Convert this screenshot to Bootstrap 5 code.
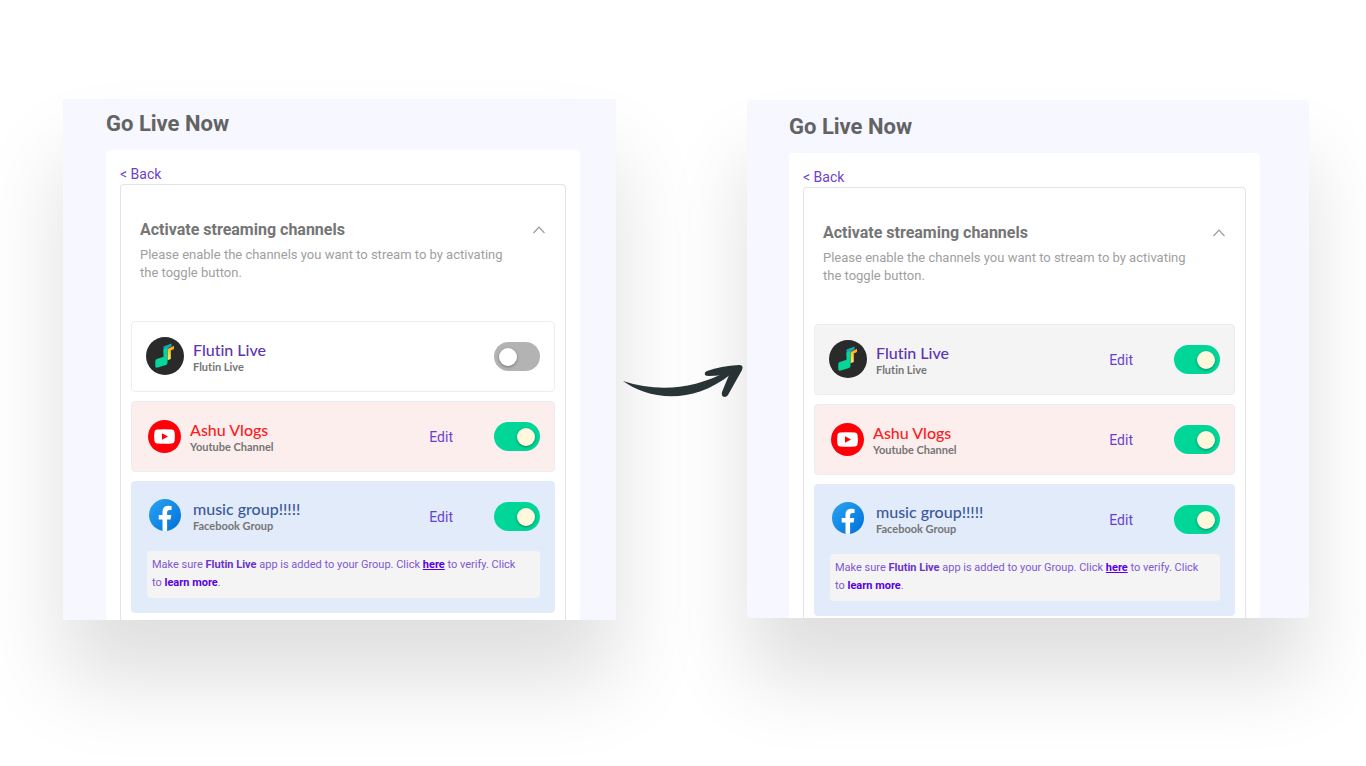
<!DOCTYPE html>
<html lang="en">
<head>
<meta charset="utf-8">
<meta name="viewport" content="width=device-width, initial-scale=1">
<title>Go Live Now</title>
<link href="https://cdn.jsdelivr.net/npm/bootstrap@5.3.0/dist/css/bootstrap.min.css" rel="stylesheet">
<style>
  body { font-family: Roboto, sans-serif; background: #fff; }
  a { color: #6c3fcb; text-decoration: none; }
  .stage { display: grid; grid-template-columns: 553fr 131px 562fr; padding: 99px 57px 60px 63px; min-height: 100vh; overflow: hidden; align-items: start; }
  .panel { background: #f6f7ff; padding: 10px 36px 0 43px; box-shadow: 0 60px 80px rgba(0,0,0,.13); }
  .panel-after { margin-top: 1px; padding: 12px 49px 0 42px; border-radius: 4px; }
  .panel h1 { font-size: 22px; line-height: 29px; font-weight: 700; color: #636363; margin: 0 0 12px; }
  .sheet { background: #fff; border-radius: 4px 4px 0 0; padding: 14px 14px 0; }
  .back { display: block; font-size: 14px; line-height: 20px; }
  .steps { border: 1px solid #e4e4e6; border-bottom: 0; border-radius: 4px 4px 0 0; padding: 33px 10px 7px; }
  .panel-after .steps { padding-bottom: 2px; }
  .intro { padding: 0 9px; height: 103px; }
  .intro h2 { font-size: 16px; line-height: 24px; font-weight: 700; color: #757575; margin: 0 0 4px; }
  .intro p { font-size: 13px; line-height: 18px; color: #a0a0a0; margin: 0; max-width: 372px; }
  .collapser { border: 0; background: none; padding: 0; line-height: 0; margin: 8px 1px 0 0; align-self: flex-start; }
  .channels { display: grid; gap: 9px; }
  .channel { border: 1px solid #e9edf4; border-radius: 4px; }
  .channel-row { height: 69px; padding: 0 14px; }
  .idle { background: #fff; }
  .flutin { background: #f4f4f4; }
  .youtube { background: #fdeeee; }
  .facebook { background: #e2ebfa; border-color: #e2ebfa; padding-bottom: 14px; }
  .avatar { width: 38px; flex: none; margin-right: 9px; padding-bottom: 2px; }
  .youtube .avatar { width: 36px; margin-right: 8px; padding-bottom: 0; }
  .avatar svg { display: block; margin: 0 auto; }
  .who { font-family: Lato, sans-serif; font-variant-ligatures: none; }
  .facebook .who { padding-bottom: 2px; }
  .facebook .avatar { padding-bottom: 4px; }
  .who-name { font-size: 16px; line-height: 20px; font-weight: 500; }
  .who-kind { font-size: 11px; line-height: 14px; font-weight: 700; color: #757575; }
  .flutin-name { color: #5d35b1; }
  .youtube-name { color: #fb2020; }
  .facebook-name { color: #3b5998; }
  .edit { font-size: 14px; line-height: 20px; margin-right: 41px; }
  .toggle { appearance: none; width: 46px; height: 29px; border-radius: 15px; background: #b3b3b3; margin: 0; padding: 0 5px; display: flex; align-items: center; flex: none; }
  .toggle::before { content: ""; width: 18px; height: 18px; border-radius: 50%; background: #fff; box-shadow: 0 1px 3px rgba(0,0,0,.35); }
  .toggle:checked { background: #00d698; justify-content: flex-end; }
  .toggle:checked::before { background: #fff8dc; }
  .note { background: #f4f4f4; border-radius: 4px; margin: 0 14px 0 15px; padding: 5px 16px 5px 5px; font-size: 11px; line-height: 18px; color: #8057d2; height: 47px; }
  .note strong { color: #6a33cc; }
  .note a { color: #5a00e6; font-weight: 700; }
  .arrow { margin: 265px 3px 0 7px; }
  .arrow svg { display: block; width: 100%; }
</style>
</head>
<body>
<svg class="position-absolute" width="0" height="0" aria-hidden="true">
  <defs>
    <linearGradient id="fb" x1="0" y1="0" x2="1" y2="1"><stop stop-color="#2aa4f4"/><stop offset="1" stop-color="#0070d8"/></linearGradient>
    <linearGradient id="gold" x1="0" y1="0" x2="0" y2="1"><stop stop-color="#ff9d0a"/><stop offset=".5" stop-color="#ffd23d"/><stop offset="1" stop-color="#ffe566"/></linearGradient>
  </defs>
  <symbol id="logo-flutin" viewBox="0 0 38 38">
    <circle cx="19" cy="19" r="19" fill="#2a2a2a"/>
    <path d="M21.500 12l6.500-3.200V12l-3.200 1.500V22l-3.300 1.300z" fill="url(#gold)"/>
    <path d="M17.500 9.500l8-3v3l-4 2V15l-4 1z" fill="#12a9b2"/>
    <path d="M17.500 12.500l4-1.500V26q0 1.300-1.400 1.900l-8.300 2.700q-2.300.5-2.500-1.400v-5.200q0-1.500 1.500-2l6.700-2.200z" fill="#05d59a"/>
  </symbol>
  <symbol id="logo-youtube" viewBox="0 0 33 33">
    <circle cx="16.500" cy="16.500" r="16.500" fill="#ff0008"/>
    <path d="M9 9.500q7.500-.6 15 0 2.400.3 2.600 2.700.5 4.300 0 8.600-.2 2.400-2.600 2.700-7.500.6-15 0-2.400-.3-2.600-2.700-.5-4.300 0-8.600.2-2.400 2.600-2.700z" fill="#fff"/>
    <path d="M14 13.200v6.600l6-3.300z" fill="#ff0008"/>
  </symbol>
  <symbol id="logo-facebook" viewBox="0 0 32 32">
    <circle cx="16" cy="16" r="16" fill="url(#fb)"/>
    <path d="M13.500 31.800V20.500H9.700V16h3.800v-3.200c0-4 2.300-6 5.800-6 1.600 0 3.300.3 3.300.3v3.900h-1.900c-1.900 0-2.600 1.100-2.600 2.400V16h4.200l-.7 4.500h-3.500v11.300q-2.300.3-4.600 0z" fill="#fff"/>
  </symbol>
  <symbol id="chevron" viewBox="0 0 12 8"><path d="M.5 7L6 1.200 11.500 7" fill="none" stroke="#999" stroke-width="1.200"/></symbol>
</svg>

<main class="stage">
  <section class="panel">
    <h1>Go Live Now</h1>
    <div class="sheet">
      <a class="back" href="#">&lt; Back</a>
      <div class="steps">
        <div class="intro d-flex justify-content-between">
          <div>
            <h2>Activate streaming channels</h2>
            <p>Please enable the channels you want to stream to by activating the toggle button.</p>
          </div>
          <button class="collapser" type="button" aria-label="Collapse"><svg width="12" height="8"><use href="#chevron"/></svg></button>
        </div>
        <div class="channels">
          <div class="channel idle">
            <div class="channel-row d-flex align-items-center">
              <div class="avatar"><svg width="38" height="38"><use href="#logo-flutin"/></svg></div>
              <label class="who me-auto" for="a1"><span class="who-name flutin-name d-block">Flutin Live</span><span class="who-kind d-block">Flutin Live</span></label>
              <input class="toggle" type="checkbox" role="switch" id="a1">
            </div>
          </div>
          <div class="channel youtube">
            <div class="channel-row d-flex align-items-center">
              <div class="avatar"><svg width="33" height="33"><use href="#logo-youtube"/></svg></div>
              <label class="who me-auto" for="a2"><span class="who-name youtube-name d-block">Ashu Vlogs</span><span class="who-kind d-block">Youtube Channel</span></label>
              <a class="edit" href="#">Edit</a>
              <input class="toggle" type="checkbox" role="switch" id="a2" checked>
            </div>
          </div>
          <div class="channel facebook">
            <div class="channel-row d-flex align-items-center">
              <div class="avatar"><svg width="32" height="32"><use href="#logo-facebook"/></svg></div>
              <label class="who me-auto" for="a3"><span class="who-name facebook-name d-block">music group!!!!!</span><span class="who-kind d-block">Facebook Group</span></label>
              <a class="edit" href="#">Edit</a>
              <input class="toggle" type="checkbox" role="switch" id="a3" checked>
            </div>
            <div class="note">Make sure <strong>Flutin Live</strong> app is added to your Group. Click <a class="text-decoration-underline" href="#">here</a> to verify. Click to <a href="#">learn more</a>.</div>
          </div>
        </div>
      </div>
    </div>
  </section>

  <div class="arrow">
    <svg viewBox="0 0 121 34" role="img" aria-label="leads to" fill="#2a3538">
      <path d="M0 17C22 33 66 44 108 10L105 7C69 26 34 28 0 17z"/>
      <path d="M84 7Q81 8 82 11 83 12 86 12L106 11 99 28Q98 32 101 33 104 33 105 31L119 6Q121 1 116 1 98 2 84 7z"/>
    </svg>
  </div>

  <section class="panel panel-after">
    <h1>Go Live Now</h1>
    <div class="sheet">
      <a class="back" href="#">&lt; Back</a>
      <div class="steps">
        <div class="intro d-flex justify-content-between">
          <div>
            <h2>Activate streaming channels</h2>
            <p>Please enable the channels you want to stream to by activating the toggle button.</p>
          </div>
          <button class="collapser" type="button" aria-label="Collapse"><svg width="12" height="8"><use href="#chevron"/></svg></button>
        </div>
        <div class="channels">
          <div class="channel flutin">
            <div class="channel-row d-flex align-items-center">
              <div class="avatar"><svg width="38" height="38"><use href="#logo-flutin"/></svg></div>
              <label class="who me-auto" for="b1"><span class="who-name flutin-name d-block">Flutin Live</span><span class="who-kind d-block">Flutin Live</span></label>
              <a class="edit" href="#">Edit</a>
              <input class="toggle" type="checkbox" role="switch" id="b1" checked>
            </div>
          </div>
          <div class="channel youtube">
            <div class="channel-row d-flex align-items-center">
              <div class="avatar"><svg width="33" height="33"><use href="#logo-youtube"/></svg></div>
              <label class="who me-auto" for="b2"><span class="who-name youtube-name d-block">Ashu Vlogs</span><span class="who-kind d-block">Youtube Channel</span></label>
              <a class="edit" href="#">Edit</a>
              <input class="toggle" type="checkbox" role="switch" id="b2" checked>
            </div>
          </div>
          <div class="channel facebook">
            <div class="channel-row d-flex align-items-center">
              <div class="avatar"><svg width="32" height="32"><use href="#logo-facebook"/></svg></div>
              <label class="who me-auto" for="b3"><span class="who-name facebook-name d-block">music group!!!!!</span><span class="who-kind d-block">Facebook Group</span></label>
              <a class="edit" href="#">Edit</a>
              <input class="toggle" type="checkbox" role="switch" id="b3" checked>
            </div>
            <div class="note">Make sure <strong>Flutin Live</strong> app is added to your Group. Click <a class="text-decoration-underline" href="#">here</a> to verify. Click to <a href="#">learn more</a>.</div>
          </div>
        </div>
      </div>
    </div>
  </section>
</main>
<script src="https://cdn.jsdelivr.net/npm/bootstrap@5.3.0/dist/js/bootstrap.bundle.min.js"></script>
</body>
</html>
